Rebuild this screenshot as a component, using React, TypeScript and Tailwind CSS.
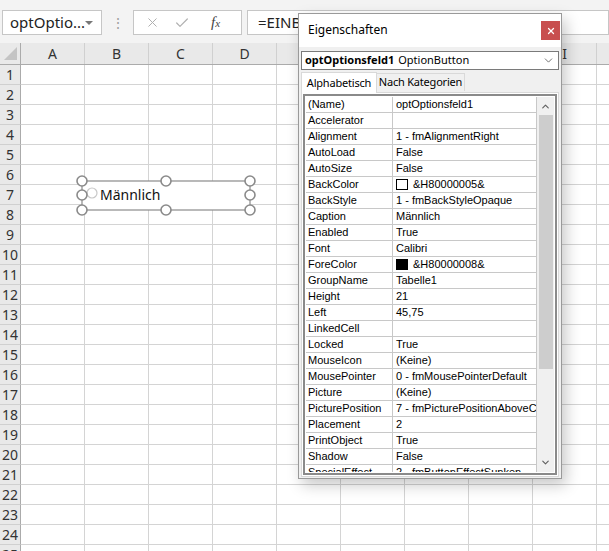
import { ChevronDown, ChevronUp, X, Check } from "lucide-react";

//################################## DATA ####################################//

const columns = ["A", "B", "C", "D", "E", "F", "G", "H", "I", "J"];
const rows = Array.from({ length: 25 }, (_, i) => i + 1);

type Prop = { name: string; value: string; swatch?: "white" | "black" };

const props: Prop[] = [
    { name: "(Name)", value: "optOptionsfeld1" },
    { name: "Accelerator", value: "" },
    { name: "Alignment", value: "1 - fmAlignmentRight" },
    { name: "AutoLoad", value: "False" },
    { name: "AutoSize", value: "False" },
    { name: "BackColor", value: "&H80000005&", swatch: "white" },
    { name: "BackStyle", value: "1 - fmBackStyleOpaque" },
    { name: "Caption", value: "Männlich" },
    { name: "Enabled", value: "True" },
    { name: "Font", value: "Calibri" },
    { name: "ForeColor", value: "&H80000008&", swatch: "black" },
    { name: "GroupName", value: "Tabelle1" },
    { name: "Height", value: "21" },
    { name: "Left", value: "45,75" },
    { name: "LinkedCell", value: "" },
    { name: "Locked", value: "True" },
    { name: "MouseIcon", value: "(Keine)" },
    { name: "MousePointer", value: "0 - fmMousePointerDefault" },
    { name: "Picture", value: "(Keine)" },
    { name: "PicturePosition", value: "7 - fmPicturePositionAboveCenter" },
    { name: "Placement", value: "2" },
    { name: "PrintObject", value: "True" },
    { name: "Shadow", value: "False" },
    { name: "SpecialEffect", value: "2 - fmButtonEffectSunken" },
];

//################################## PARTS ###################################//

function FormulaBar() {
    return (
        <div className="flex h-[43px] items-start bg-[#f3f3f3] pt-[10px]">
            <div className="ml-[2px] flex h-[25px] w-[100px] items-center justify-between border border-[#c6c6c6] bg-white pl-[7px] pr-[8px] text-[15px] text-[#222]">
                <span>optOptio...</span>
                <span className="h-0 w-0 border-x-[4px] border-t-[4px] border-x-transparent border-t-[#777]"></span>
            </div>
            <div className="flex h-[25px] w-[31px] items-center justify-center text-[14px] leading-none text-[#a0a0a0]">⋮</div>
            <div className="flex h-[25px] w-[109px] items-center border border-[#c6c6c6] bg-white text-[#b0b0b0]">
                <X size={15} strokeWidth={1.6} className="ml-[11px]" />
                <Check size={16} strokeWidth={1.8} className="ml-[14px]" />
                <span className="ml-[21px] font-['Liberation_Serif'] text-[15px] italic text-[#444]">f<span className="text-[11px]">x</span></span>
            </div>
            <div className="ml-[5px] flex h-[25px] flex-1 items-center border border-[#c6c6c6] bg-white pl-[10px] text-[15px] text-[#222]">
                {/* der Rest der Formel liegt unter dem Dialog */}
                <span className="w-[40px] overflow-hidden whitespace-nowrap">=EINBETTEN</span>
            </div>
        </div>
    );
}

function Sheet() {
    return (
        <div>
            <div className="flex h-[22px] border-b border-[#ababab] bg-[#e9e9e9]">
                <div className="flex w-[21px] shrink-0 items-end justify-end border-r border-[#ababab] pb-[4px] pr-[3px]">
                    <svg width="13" height="13">
                        <polygon points="13,0 13,13 0,13" fill="#c4c4c4" />
                    </svg>
                </div>
                {columns.map((c) => (
                    <div key={c} className="flex w-[64px] shrink-0 items-center justify-center border-r border-[#d0d0d0] text-[14px] text-[#333]">
                        {c}
                    </div>
                ))}
            </div>
            {rows.map((r) => (
                <div key={r} className="flex h-[20px]">
                    <div className="flex w-[21px] shrink-0 items-center justify-center border-b border-r border-b-[#d0d0d0] border-r-[#ababab] bg-[#e9e9e9] text-[14px] text-[#333]">
                        {r}
                    </div>
                    {columns.map((c) => (
                        <div key={c} className="w-[64px] shrink-0 border-b border-r border-[#d4d4d4]"></div>
                    ))}
                </div>
            ))}
        </div>
    );
}

function OptionControl() {
    const handles = [
        [6, 6], [90, 6], [174, 6],
        [6, 20], [174, 20],
        [6, 35], [90, 35], [174, 35],
    ];
    return (
        <div className="absolute left-[76px] top-[175px] h-[41px] w-[180px]">
            <svg width="180" height="41" className="absolute left-0 top-0">
                <rect x="6" y="6" width="168" height="29" fill="white" stroke="#8a8a8a" strokeWidth="1.2" />
                <circle cx="16" cy="18" r="5" fill="none" stroke="#c8c8c8" strokeWidth="1.2" />
                {handles.map(([x, y], i) => (
                    <circle key={i} cx={x} cy={y} r="5" fill="white" stroke="#8a8a8a" strokeWidth="1.6" />
                ))}
            </svg>
            <span className="absolute left-[24px] top-[10px] text-[14px] leading-[20px] text-[#111]">Männlich</span>
        </div>
    );
}

function PropertyRow({ p }: { p: Prop }) {
    return (
        <div className="flex h-[16px] shrink-0 border-b border-[#c8c8c8] font-['Liberation_Sans'] text-[11px] leading-[15px] text-black">
            <div className="w-[87px] shrink-0 overflow-hidden whitespace-nowrap border-r border-[#c8c8c8] pl-[2px]">{p.name}</div>
            <div className="flex flex-1 items-center overflow-hidden whitespace-nowrap pl-[3px]">
                {p.swatch && (
                    <span className={`mr-[5px] h-[11px] w-[12px] shrink-0 border border-black ${p.swatch === "black" ? "bg-black" : "bg-white"}`}></span>
                )}
                {p.value}
            </div>
        </div>
    );
}

function PropertiesDialog() {
    return (
        <div className="absolute left-[298px] top-[13px] flex h-[466px] w-[264px] flex-col border border-[#9a9a9a] bg-[#f0f0f0] shadow-[4px_6px_14px_rgba(0,0,0,0.22)]">
            <div className="flex h-[33px] shrink-0 items-start justify-between bg-white">
                <span className="mt-[7px] pl-[9px] text-[12px] text-black">Eigenschaften</span>
                <div className="mr-[1px] mt-[7px] flex h-[19px] w-[19px] items-center justify-center bg-[#c84f4f] text-white">
                    <X size={10} strokeWidth={3} />
                </div>
            </div>
            <div className="mx-[2px] mt-[4px] flex h-[19px] shrink-0 items-center whitespace-nowrap border border-[#7a7a7a] bg-white pl-[3px] pr-[3px] text-[11px] text-black">
                <span className="font-bold">optOptionsfeld1</span>
                <span className="ml-[4px]">OptionButton</span>
                <ChevronDown size={13} strokeWidth={1.5} className="ml-auto text-[#555]" />
            </div>
            <div className="mx-[2px] mt-[2px] flex h-[21px] shrink-0 items-end whitespace-nowrap text-[11px] tracking-[-0.2px] text-black">
                <div className="relative z-10 flex h-[21px] w-[76px] items-center justify-center border border-b-0 border-[#d9d9d9] bg-white">Alphabetisch</div>
                <div className="mb-[2px] flex h-[18px] w-[88px] items-center justify-center border border-b-0 border-l-0 border-[#d9d9d9] bg-[#f0f0f0]">Nach Kategorien</div>
            </div>
            <div className="mx-[2px] -mt-[1px] mb-[3px] flex flex-1 flex-col border border-[#d9d9d9] bg-white p-[1px]">
                <div className="flex h-[381px] border-2 border-double border-[#8a8a8a] p-[1px]">
                    <div className="flex flex-1 flex-col overflow-hidden border-r border-[#c8c8c8]">
                        {props.map((p) => (
                            <PropertyRow key={p.name} p={p} />
                        ))}
                    </div>
                    <div className="flex w-[17px] shrink-0 flex-col items-center bg-[#f0f0f0]">
                        <ChevronUp size={11} strokeWidth={2.5} className="mt-[4px] text-[#606060]" />
                        <div className="mt-[3px] h-[254px] w-[14px] bg-[#cdcdcd]"></div>
                        <ChevronDown size={11} strokeWidth={2.5} className="mt-auto mb-[4px] text-[#606060]" />
                    </div>
                </div>
            </div>
        </div>
    );
}

//################################## APP #####################################//

export default function App() {
    return (
        <div className="relative h-[551px] w-[609px] overflow-hidden bg-white font-['Noto_Sans',sans-serif]">
            <FormulaBar />
            <Sheet />
            <OptionControl />
            <PropertiesDialog />
        </div>
    );
}
